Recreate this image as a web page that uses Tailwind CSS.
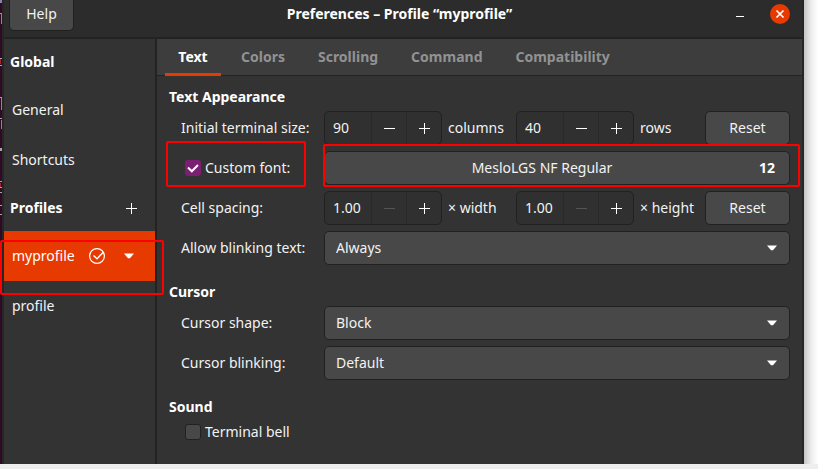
<!DOCTYPE html>
<html lang="en">
<head>
<meta charset="utf-8">
<title>Preferences – Profile “myprofile”</title>
<script src="https://cdn.jsdelivr.net/npm/@tailwindcss/browser@4"></script>
</head>
<body class="flex min-h-screen overflow-x-hidden bg-[#eeeeee] pb-[5px] font-['Noto_Sans',sans-serif] text-[14px] leading-5 text-[#f2f2f2]">
<div class="relative w-[2px] shrink-0 bg-[#300a24]" aria-hidden="true">
  <svg class="absolute inset-0" width="2" height="464" viewBox="0 0 2 464" shape-rendering="crispEdges">
    <path d="M0 0h2v3H0zM1 13h1v11H1zM1 98h1v12H1zM1 120h1v9H1z" fill="#8d7fae"/>
    <path d="M0 13h1v1H0zM0 58h2v1H0zM0 65h2v1H0zM0 97h2v1H0zM0 118h2v1H0zM0 148h2v3H0zM0 181h2v1H0zM0 187h2v1H0zM0 192h2v1H0zM0 205h2v1H0zM0 214h2v1H0zM0 268h2v1H0zM0 278h2v1H0z" fill="#a9a2ab"/>
    <path d="M0 59h1v5H0zM0 183h1v4H0z" fill="#b0202c"/>
  </svg>
</div>
<div class="flex min-w-0 flex-1 flex-col border-x-2 border-[#262626] bg-[#333333]">
  <header class="grid grid-cols-[1fr_auto_1fr] items-start border-b-2 border-[#232323] bg-[#2c2c2c] pr-3 pl-[5px]">
    <button class="-mt-1 mb-1.5 h-[35px] w-[65px] justify-self-start rounded-[5px] border border-[#202020] bg-[#484848] pt-px">Help</button>
    <h1 class="pt-1 font-bold text-white">Preferences – Profile “myprofile”</h1>
    <div class="flex items-center gap-[25px] justify-self-end pt-1">
      <button aria-label="Minimize" class="block"><svg width="10" height="20" viewBox="0 0 10 20"><path d="M1 12h8v1H1z" fill="#fff"/></svg></button>
      <button aria-label="Close" class="block"><svg width="20" height="20" viewBox="0 0 20 20"><circle cx="10" cy="10" r="10" fill="#e63a00"/><path d="M6.500 6.500l7 7M13.500 6.500l-7 7" stroke="#fff" stroke-width="1.700"/></svg></button>
    </div>
  </header>
  <div class="flex flex-1">
    <aside class="w-[153px] shrink-0 border-r-2 border-[#232323]">
      <h2 class="flex h-[46px] items-center pl-1.5 font-bold text-white">Global</h2>
      <nav>
        <a href="#general" class="flex h-[50px] items-center pl-2">General</a>
        <a href="#shortcuts" class="flex h-[50px] items-center pl-2">Shortcuts</a>
      </nav>
      <div class="flex h-[46px] items-center justify-between pr-[18px] pl-1.5">
        <h2 class="font-bold text-white">Profiles</h2>
        <button aria-label="Add profile"><svg width="12" height="12" viewBox="0 0 12 12"><path d="M6.500 1v11M1 6.500h11" stroke="#fff"/></svg></button>
      </div>
      <nav>
        <div class="relative flex h-[50px] items-center bg-[#e63a00] pl-2 text-white">
          <a href="#myprofile" class="w-[77px]" aria-current="page">myprofile</a>
          <svg width="16" height="16" viewBox="0 0 16 16" fill="none" stroke="#fff"><circle cx="8" cy="8" r="7.400" stroke-width="1.200"/><path d="M4.500 7.500l3.500 3.300 6.500-6.800" stroke-width="1.500"/></svg>
          <button aria-label="Profile menu" class="ml-[19px]"><svg width="10" height="6" viewBox="0 0 10 6"><path d="M0 .5h10L6 5.200H4z" fill="#fff"/></svg></button>
          <span class="pointer-events-none absolute -right-[9px] -bottom-3.5 top-[9px] -left-1 rounded-[2px] border-2 border-[#fe0000]"></span>
        </div>
        <a href="#profile" class="flex h-[50px] items-center pl-2">profile</a>
      </nav>
    </aside>
    <main class="min-w-0 flex-1">
      <nav class="flex h-[37px] border-b border-[#232323] bg-[#3d3d3d] pl-2 font-bold text-[#929292]">
        <a href="#text" class="mr-3 h-[37px] w-14 border-b-3 border-[#e63a00] pt-2 text-center text-white">Text</a>
        <div class="flex gap-[17px] pt-2">
          <a href="#colors" class="px-2">Colors</a>
          <a href="#scrolling" class="px-2">Scrolling</a>
          <a href="#command" class="px-2">Command</a>
          <a href="#compat" class="px-2">Compatibility</a>
        </div>
      </nav>
      <form class="pt-[11px] pr-3 pl-3">
        <h3 class="font-bold text-white">Text Appearance</h3>
        <div class="mt-1 grid grid-cols-[137px_1fr] gap-x-1.5 gap-y-1.5 pl-3">
          <label for="cols" class="self-center whitespace-nowrap">Initial terminal size:</label>
          <div class="grid h-[34px] grid-cols-[118px_62px_118px_59px_1fr] items-center gap-x-1.5">
            <div class="flex h-full items-center rounded-[5px] border border-[#212121] bg-[#303030]">
              <input id="cols" value="90" class="h-full w-[47px] border-r border-[#292929] pb-0.5 pl-2">
              <button type="button" aria-label="Fewer columns" class="flex h-full w-[35px] items-center justify-center border-r border-[#292929]"><svg width="11" height="11" viewBox="0 0 11 11"><path d="M0 5.500h11" stroke="#fff"/></svg></button>
              <button type="button" aria-label="More columns" class="flex h-full flex-1 items-center justify-center"><svg width="11" height="11" viewBox="0 0 11 11"><path d="M0 5.500h11M5.500 0v11" stroke="#fff"/></svg></button>
            </div>
            <label for="cols">columns</label>
            <div class="flex h-full items-center rounded-[5px] border border-[#212121] bg-[#303030]">
              <input id="rows" value="40" class="h-full w-[47px] border-r border-[#292929] pb-0.5 pl-2">
              <button type="button" aria-label="Fewer rows" class="flex h-full w-[35px] items-center justify-center border-r border-[#292929]"><svg width="11" height="11" viewBox="0 0 11 11"><path d="M0 5.500h11" stroke="#fff"/></svg></button>
              <button type="button" aria-label="More rows" class="flex h-full flex-1 items-center justify-center"><svg width="11" height="11" viewBox="0 0 11 11"><path d="M0 5.500h11M5.500 0v11" stroke="#fff"/></svg></button>
            </div>
            <label for="rows">rows</label>
            <button type="button" class="h-full rounded-[5px] border border-[#212121] bg-[#484848]">Reset</button>
          </div>
          <label class="relative flex items-center gap-1 pl-1 whitespace-nowrap">
            <span class="relative size-4">
              <input type="checkbox" checked class="block size-4 appearance-none rounded-[3px] bg-[#7c1f72]">
              <svg class="pointer-events-none absolute inset-0" width="16" height="16" viewBox="0 0 16 16"><path d="M3 7.500l3.800 3.800 6.200-6.300" fill="none" stroke="#fff" stroke-width="2"/></svg>
            </span>
            Custom font:
            <span class="pointer-events-none absolute -top-2.5 right-3 -bottom-0.5 -left-[15px] rounded-[2px] border-2 border-[#fe0000]"></span>
          </label>
          <button type="button" class="relative flex h-[34px] items-center rounded-[5px] border border-[#212121] bg-[#484848] pr-3.5">
            <span class="flex-1 text-center">MesloLGS NF Regular</span><span class="font-bold text-white">12</span>
            <span class="pointer-events-none absolute -top-2 -right-[11px] -bottom-[3px] -left-0.5 rounded-[2px] border-2 border-[#fe0000]"></span>
          </button>
          <label for="cw" class="self-center">Cell spacing:</label>
          <div class="grid h-[34px] grid-cols-[118px_62px_118px_59px_1fr] items-center gap-x-1.5">
            <div class="flex h-full items-center rounded-[5px] border border-[#212121] bg-[#303030]">
              <input id="cw" value="1.00" class="h-full w-[47px] border-r border-[#292929] pb-0.5 pl-2">
              <button type="button" disabled aria-label="Narrower" class="flex h-full w-[35px] items-center justify-center border-r border-[#292929]"><svg width="11" height="11" viewBox="0 0 11 11"><path d="M0 5.500h11" stroke="#555"/></svg></button>
              <button type="button" aria-label="Wider" class="flex h-full flex-1 items-center justify-center"><svg width="11" height="11" viewBox="0 0 11 11"><path d="M0 5.500h11M5.500 0v11" stroke="#fff"/></svg></button>
            </div>
            <label for="cw" class="whitespace-nowrap">× width</label>
            <div class="flex h-full items-center rounded-[5px] border border-[#212121] bg-[#303030]">
              <input id="ch" value="1.00" class="h-full w-[47px] border-r border-[#292929] pb-0.5 pl-2">
              <button type="button" disabled aria-label="Shorter" class="flex h-full w-[35px] items-center justify-center border-r border-[#292929]"><svg width="11" height="11" viewBox="0 0 11 11"><path d="M0 5.500h11" stroke="#555"/></svg></button>
              <button type="button" aria-label="Taller" class="flex h-full flex-1 items-center justify-center"><svg width="11" height="11" viewBox="0 0 11 11"><path d="M0 5.500h11M5.500 0v11" stroke="#fff"/></svg></button>
            </div>
            <label for="ch" class="whitespace-nowrap">× height</label>
            <button type="button" class="h-full rounded-[5px] border border-[#212121] bg-[#484848]">Reset</button>
          </div>
          <label for="blinktext" class="self-center whitespace-nowrap">Allow blinking text:</label>
          <div class="relative">
            <select id="blinktext" class="block h-[34px] w-full appearance-none rounded-[5px] border border-[#212121] bg-[#484848] px-[11px]"><option>Always</option></select>
            <svg class="pointer-events-none absolute top-3.5 right-[13px]" width="10" height="6" viewBox="0 0 10 6"><path d="M0 .5h10L6 5.200H4z" fill="#fff"/></svg>
          </div>
        </div>
        <h3 class="mt-[17px] font-bold text-white">Cursor</h3>
        <div class="mt-1 grid grid-cols-[137px_1fr] gap-1.5 pl-3">
          <label for="shape" class="self-center">Cursor shape:</label>
          <div class="relative">
            <select id="shape" class="block h-[34px] w-full appearance-none rounded-[5px] border border-[#212121] bg-[#484848] px-[11px]"><option>Block</option></select>
            <svg class="pointer-events-none absolute top-3.5 right-[13px]" width="10" height="6" viewBox="0 0 10 6"><path d="M0 .5h10L6 5.200H4z" fill="#fff"/></svg>
          </div>
          <label for="blink" class="self-center">Cursor blinking:</label>
          <div class="relative">
            <select id="blink" class="block h-[34px] w-full appearance-none rounded-[5px] border border-[#212121] bg-[#484848] px-[11px]"><option>Default</option></select>
            <svg class="pointer-events-none absolute top-3.5 right-[13px]" width="10" height="6" viewBox="0 0 10 6"><path d="M0 .5h10L6 5.200H4z" fill="#fff"/></svg>
          </div>
        </div>
        <h3 class="mt-[17px] font-bold text-white">Sound</h3>
        <label class="mt-[5px] flex items-center gap-1 pl-4">
          <input type="checkbox" class="size-4 appearance-none rounded-[3px] border border-[#212121] bg-[#484848]">
          Terminal bell
        </label>
      </form>
    </main>
  </div>
</div>
<div class="w-3.5 shrink-0 bg-linear-to-r from-[#c4c4c4] via-[#ececec] to-white" aria-hidden="true"></div>
</body>
</html>
